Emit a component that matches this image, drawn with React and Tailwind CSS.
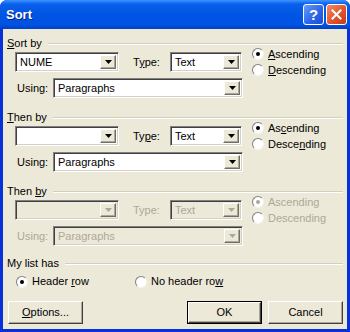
import React from "react";

const face = "bg-[#ECE9D8]";

function Arrow({ disabled }) {
  return (
    <div className="w-[16px] h-full flex items-center justify-center bg-[#ECE9D8] border border-t-white border-l-white border-b-[#716F64] border-r-[#716F64] shadow-[inset_-1px_-1px_0_#ACA899]">
      <svg width="7" height="4" viewBox="0 0 7 4">
        <path d="M0 0h7L3.5 4z" fill={disabled ? "#ACA899" : "#000"} />
      </svg>
    </div>
  );
}

function Combo({ value, w, disabled }) {
  return (
    <div
      className={`h-[20px] flex items-stretch p-[2px] border border-t-[#808080] border-l-[#808080] border-b-white border-r-white shadow-[inset_1px_1px_0_#404040,inset_-1px_-1px_0_#D4D0C8] ${
        disabled ? face : "bg-white"
      } ${w}`}
    >
      <div
        className={`flex-1 flex items-center pl-[2px] ${
          disabled ? "text-[#ACA899]" : "text-black"
        }`}
      >
        {value}
      </div>
      <Arrow disabled={disabled} />
    </div>
  );
}

function Radio({ checked, disabled, children }) {
  return (
    <div className="flex items-center h-[13px]">
      <div className="w-[12px] h-[12px] rounded-full bg-white border border-t-[#808080] border-l-[#808080] border-b-[#F4F3EE] border-r-[#F4F3EE] flex items-center justify-center">
        {checked && (
          <div
            className={`w-[4px] h-[4px] rounded-full ${
              disabled ? "bg-[#ACA899]" : "bg-black"
            }`}
          ></div>
        )}
      </div>
      <span
        className={`ml-[4px] ${disabled ? "text-[#ACA899]" : "text-black"}`}
      >
        {children}
      </span>
    </div>
  );
}

function GroupLabel({ children }) {
  return (
    <div className="h-[13px] flex items-center pl-[4px] pr-[4px]">
      <span className="whitespace-nowrap">{children}</span>
      <div className="flex-1 ml-[6px] h-[2px] border-t border-t-[#D0D0BF] border-b border-b-white"></div>
    </div>
  );
}

function Section({ label, field, type, asc, desc, disabled }) {
  const txt = disabled ? "text-[#ACA899]" : "text-black";
  return (
    <div className="flex flex-col">
      <GroupLabel>{label}</GroupLabel>
      <div className="mt-[2px] h-[20px] flex items-center pl-[12px]">
        <Combo value={field} w="w-[104px]" disabled={disabled} />
        <span className={`ml-[14px] w-[37px] ${txt}`}>{type}</span>
        <Combo value="Text" w="w-[72px]" disabled={disabled} />
        <div className="ml-[10px] flex flex-col gap-[3px]">
          <Radio checked disabled={disabled}>
            {asc}
          </Radio>
          <Radio disabled={disabled}>{desc}</Radio>
        </div>
      </div>
      <div className="mt-[6px] h-[20px] flex items-center pl-[14px]">
        <span className={`w-[36px] ${txt}`}>Using:</span>
        <Combo value="Paragraphs" w="w-[190px]" disabled={disabled} />
      </div>
    </div>
  );
}

function Btn({ children, w, def }) {
  return (
    <div
      className={`${w} h-[23px] flex items-center justify-center bg-[#ECE9D8] ${
        def ? "border border-black" : ""
      }`}
    >
      <div className="w-full h-full flex items-center justify-center border border-t-white border-l-white border-b-[#404040] border-r-[#404040] shadow-[inset_-1px_-1px_0_#ACA899]">
        {children}
      </div>
    </div>
  );
}

export default function App() {
  return (
    <div className="w-[350px] h-[332px] flex flex-col bg-[#0831D9] rounded-t-[7px] overflow-hidden font-['Liberation_Sans',Arial,sans-serif] text-[11px] text-black">
      {/* title bar */}
      <div className="h-[29px] flex items-center pl-[6px] pr-[3px] bg-[linear-gradient(to_bottom,#3D95FF_0%,#0A60EA_14%,#0055E5_50%,#0052E2_85%,#0040C4_100%)]">
        <span className="flex-1 text-white font-bold text-[13px] [text-shadow:1px_1px_0_#0A1E80]">
          Sort
        </span>
        <div className="w-[21px] h-[21px] rounded-[3px] border border-white bg-[linear-gradient(135deg,#6A9CF8,#2A62E8_60%,#1A4ED6)] flex items-center justify-center text-white font-bold text-[15px] leading-none">
          ?
        </div>
        <div className="ml-[2px] w-[21px] h-[21px] rounded-[3px] border border-white bg-[linear-gradient(135deg,#F08A64,#E0502A_60%,#C83A14)] flex items-center justify-center">
          <svg width="11" height="11" viewBox="0 0 11 11">
            <path
              d="M1.5 1.5l8 8M9.5 1.5l-8 8"
              stroke="#fff"
              strokeWidth="2"
              strokeLinecap="square"
            />
          </svg>
        </div>
      </div>

      {/* body */}
      <div className={`flex-1 mx-[3px] mb-[3px] ${face} flex flex-col pt-[8px]`}>
        <Section
          label={
            <>
              <u>S</u>ort by
            </>
          }
          field="NUME"
          type={
            <>
              T<u>y</u>pe:
            </>
          }
          asc={
            <>
              <u>A</u>scending
            </>
          }
          desc={
            <>
              <u>D</u>escending
            </>
          }
        />
        <div className="mt-[13px]">
          <Section
            label={
              <>
                <u>T</u>hen by
              </>
            }
            field=""
            type={
              <>
                Ty<u>p</u>e:
              </>
            }
            asc={
              <>
                As<u>c</u>ending
              </>
            }
            desc={
              <>
                Desce<u>n</u>ding
              </>
            }
          />
        </div>
        <div className="mt-[13px]">
          <Section
            label={
              <>
                Then <u>b</u>y
              </>
            }
            field=""
            type="Type:"
            asc="Ascending"
            desc="Descending"
            disabled
          />
        </div>

        <div className="mt-[11px]">
          <GroupLabel>My list has</GroupLabel>
        </div>
        <div className="mt-[5px] flex items-center pl-[13px]">
          <div className="w-[119px]">
            <Radio checked>
              Header <u>r</u>ow
            </Radio>
          </div>
          <Radio>
            No header ro<u>w</u>
          </Radio>
        </div>

        <div className="mt-[13px] flex items-center pl-[5px] pr-[4px]">
          <Btn w="w-[75px]">
            <span>
              <u>O</u>ptions...
            </span>
          </Btn>
          <div className="flex-1"></div>
          <Btn w="w-[75px]" def>
            OK
          </Btn>
          <div className="ml-[6px]">
            <Btn w="w-[75px]">Cancel</Btn>
          </div>
        </div>
      </div>
    </div>
  );
}
